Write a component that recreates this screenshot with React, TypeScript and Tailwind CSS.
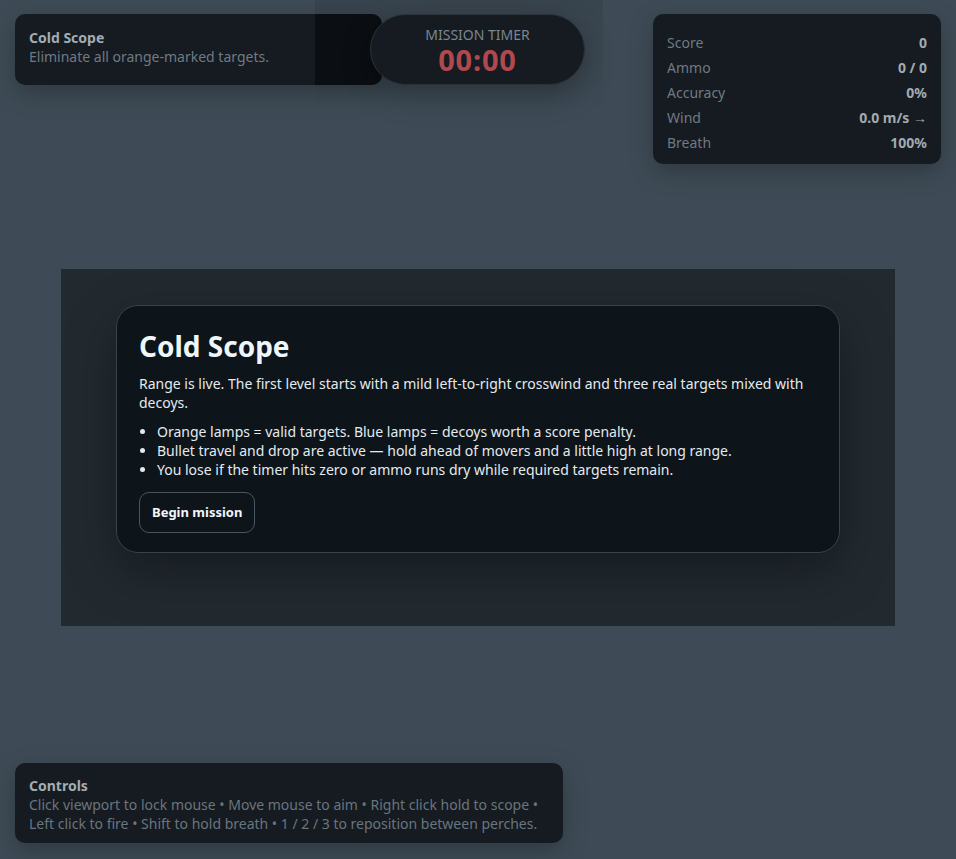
import React from "react";

const stats = [
  { label: "Score", value: "0" },
  { label: "Ammo", value: "0 / 0" },
  { label: "Accuracy", value: "0%" },
  { label: "Wind", value: "0.0 m/s →" },
  { label: "Breath", value: "100%" },
];

const App = () => {
  return (
    <div
      className="relative h-screen w-full overflow-hidden bg-[#3e4b56] text-[14px] leading-[19px]"
      style={{ fontFamily: "'Noto Sans', 'Open Sans', sans-serif" }}
    >
      {/* game viewport (dimmed, waiting for start) */}
      <div className="flex h-full items-start justify-center pt-[269px]">
        <div className="flex h-[357px] w-[834px] justify-center bg-[#222a30] pt-[36px]">
          <div className="h-[248px] w-[724px] rounded-[22px] border border-[#39424a] bg-[#0d141a] px-[22px] pt-[22px] shadow-[0_18px_50px_rgba(0,0,0,0.35)]">
            <h1 className="text-[28px] font-bold leading-[36px] text-[#eef6fa]">Cold Scope</h1>
            <p className="mt-[10px] text-[#e4ebef]">
              Range is live. The first level starts with a mild left-to-right crosswind and three real targets mixed with decoys.
            </p>
            <ul className="mt-[10px] list-disc pl-[18px] text-[#e4ebef]">
              <li>Orange lamps = valid targets. Blue lamps = decoys worth a score penalty.</li>
              <li>Bullet travel and drop are active — hold ahead of movers and a little high at long range.</li>
              <li>You lose if the timer hits zero or ammo runs dry while required targets remain.</li>
            </ul>
            <button className="mt-[13px] h-[41px] rounded-[10px] border border-[#4b565e] px-3 text-[13px] font-bold text-[#f2f7fa]">
              Begin mission
            </button>
          </div>
        </div>
      </div>

      {/* timer shadow band */}
      <div className="pointer-events-none absolute left-[315px] top-0 h-[115px] w-[288px] bg-gradient-to-b from-black/10 via-black/5 to-transparent" />

      {/* mission brief */}
      <div className="absolute left-[15px] top-[14px] h-[71px] w-[367px] overflow-hidden rounded-[10px] bg-[#151b21] px-[14px] py-[14px] shadow-[0_8px_24px_rgba(0,0,0,0.25)]">
        <div className="font-bold text-[#a3acb3]">Cold Scope</div>
        <div className="text-[#6f7a83]">Eliminate all orange-marked targets.</div>
        <div className="absolute right-0 top-0 h-full w-[67px] bg-black/45" />
      </div>

      {/* mission timer */}
      <div className="absolute left-[370px] top-[14px] flex h-[71px] w-[215px] flex-col items-center justify-center rounded-full border border-[#2b3339] bg-[#151b21] pt-[3px] shadow-[0_10px_30px_rgba(0,0,0,0.3)]">
        <div className="text-[14px] uppercase leading-[17px] text-[#7b868f]">Mission Timer</div>
        <div className="text-[29px] font-bold leading-[33px] tracking-[0.8px] text-[#b0484e]">00:00</div>
      </div>

      {/* stats */}
      <div className="absolute right-[15px] top-[14px] w-[288px] rounded-[10px] bg-[#151b21] px-[14px] pb-[9px] pt-[16px] shadow-[0_8px_24px_rgba(0,0,0,0.25)]">
        {stats.map((s) => (
          <div key={s.label} className="flex h-[25px] items-center justify-between">
            <span className="text-[#6f7a83]">{s.label}</span>
            <span className="font-bold text-[#a1aab1]">{s.value}</span>
          </div>
        ))}
      </div>

      {/* controls */}
      <div className="absolute bottom-[16px] left-[15px] w-[548px] rounded-[10px] bg-[#151b21] px-[14px] pb-[10px] pt-[13px] shadow-[0_8px_24px_rgba(0,0,0,0.25)]">
        <div className="font-bold text-[#a3acb3]">Controls</div>
        <div className="text-[#6a757e]">
          Click viewport to lock mouse • Move mouse to aim • Right click hold to scope • Left click to fire • Shift to hold breath • 1 / 2 / 3 to reposition between perches.
        </div>
      </div>
    </div>
  );
};

export default App;
